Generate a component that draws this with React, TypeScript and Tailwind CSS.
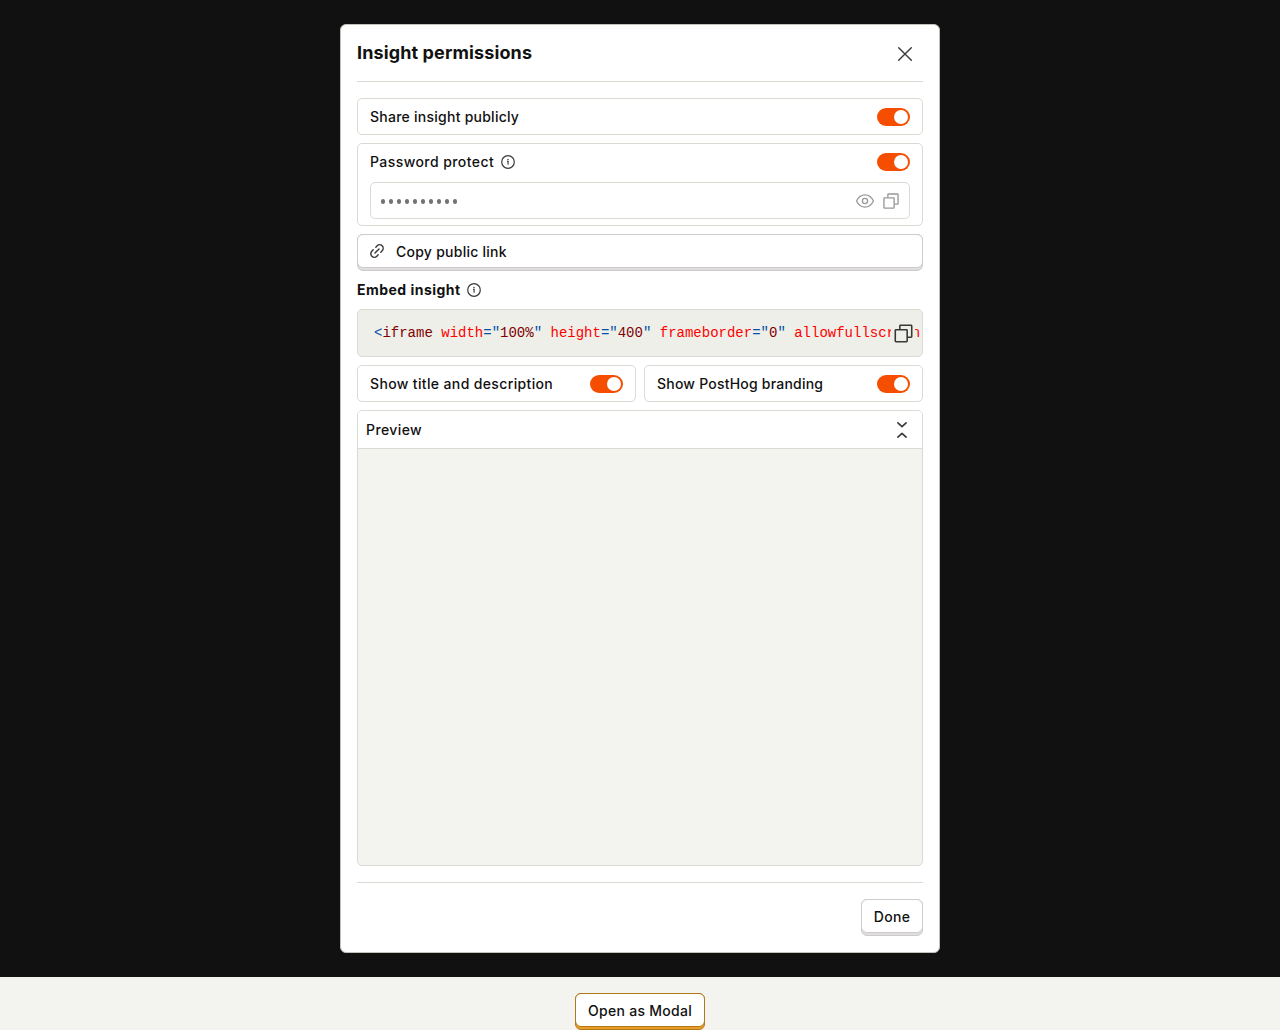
import React from 'react';

function InfoIcon() {
  return (
    <svg width="16" height="16" viewBox="0 0 16 16" fill="none" stroke="#383838" className="shrink-0">
      <circle cx="8" cy="8" r="6.3" strokeWidth="1.2" />
      <path d="M7 7.4h1.1v3.4" strokeWidth="1.1" />
      <circle cx="8" cy="5.4" r="0.75" fill="#383838" stroke="none" />
    </svg>
  );
}

function CopyIcon({ className }: { className: string }) {
  return (
    <svg viewBox="0 0 24 24" fill="none" stroke="currentColor" strokeWidth="1.8" strokeLinejoin="round" className={className}>
      <rect x="2.6" y="7.8" width="13.6" height="13.6" rx="0.8" />
      <path d="M7.8 7.4V3.4a.8.8 0 0 1 .8-.8h12a.8.8 0 0 1 .8.8v12a.8.8 0 0 1-.8.8h-4" />
    </svg>
  );
}

function Toggle() {
  return (
    <span className="flex h-[18px] w-[33px] shrink-0 items-center justify-end rounded-full bg-[#f54e00] pr-[2px]">
      <span className="size-[14px] rounded-full bg-white" />
    </span>
  );
}

function SwitchRow({ label, className }: { label: string; className: string }) {
  return (
    <label className={`flex h-[37px] items-center justify-between rounded-[5px] border border-[#dadad2] px-3 ${className}`}>
      {label}
      <Toggle />
    </label>
  );
}

function Button({ children, className }: { children: React.ReactNode; className: string }) {
  return (
    <button type="button" className={`flex h-[37px] flex-col rounded-[6px] border ${className}`}>
      {children}
    </button>
  );
}

export default function App() {
  return (
    <div className="h-[1030px] overflow-hidden bg-[#f3f4ef] font-['Inter',sans-serif] text-sm leading-5 font-medium text-[#111]">
      <div className="flex h-[977px] justify-center bg-[#111] pt-6">
        <div className="flex h-[929px] w-[600px] flex-col rounded-[6px] border border-[#c1c2b9] bg-white px-4">
          <header className="flex h-[57px] shrink-0 items-center justify-between border-b border-[#dadad2]">
            <h3 className="text-[18px] leading-6 font-bold tracking-[0.12px]">Insight permissions</h3>
            <svg width="16" height="16" viewBox="0 0 16 16" fill="none" stroke="#383838" strokeWidth="1.4" strokeLinecap="round" className="mt-[2px] mr-[10px]">
              <path d="M1.7 1.7l12.6 12.6M14.3 1.7L1.7 14.3" />
            </svg>
          </header>

          <div className="flex flex-col gap-2 pt-4">
            <SwitchRow label="Share insight publicly" className="tracking-[0.25px]" />

            <div className="h-[83px] rounded-[5px] border border-[#dadad2] px-3">
              <div className="flex h-[36px] items-center">
                <span className="tracking-[0.43px]">Password protect</span>
                <span className="ml-1.5 flex"><InfoIcon /></span>
                <span className="ml-auto"><Toggle /></span>
              </div>
              <div className="mt-[2px] flex h-[37px] items-center rounded-[5px] border border-[#dadad2] px-2">
                <span className="flex gap-[4px] pt-[2px] pl-[2px]">
                  {Array.from({ length: 10 }, (_, i) => (
                    <span key={i} className="h-[5px] w-[4px] rounded-full bg-[#737373]" />
                  ))}
                </span>
                <svg width="20" height="20" viewBox="0 0 20 20" fill="none" stroke="#999" strokeWidth="1.3" strokeLinejoin="round" className="ml-auto">
                  <path d="M1.5 10C3.5 6 6.4 3.9 10 3.9S16.500 6 18.500 10c-2 4-4.900 6.100-8.500 6.100S3.500 14 1.500 10z" />
                  <circle cx="10" cy="10" r="2.6" />
                </svg>
                <CopyIcon className="mr-[1px] ml-[7px] size-[18px] text-[#999]" />
              </div>
            </div>

            <Button className="w-full border-[#ccc] bg-[#e1dddd]">
              <span className="-mx-px -mt-px flex h-[34px] items-center self-stretch rounded-[6px] border border-[#ccc] bg-white px-[10px] pt-[1px]">
                <svg width="18" height="18" viewBox="0 0 24 24" fill="none" stroke="#383838" strokeWidth="1.9" strokeLinecap="round" strokeLinejoin="round" className="-mt-px">
                  <g transform="rotate(-45 12 12)">
                    <path d="M9.500 7.300H7a4.700 4.700 0 0 0 0 9.400h2.500" />
                    <path d="M14.500 7.300H17a4.700 4.700 0 0 1 0 9.400h-2.500" />
                    <path d="M8.200 12h7.600" />
                  </g>
                </svg>
                <span className="ml-[10px] tracking-[0.25px]">Copy public link</span>
              </span>
            </Button>

            <div className="flex h-[22px] items-center gap-[5px] font-bold tracking-[0.48px]">
              Embed insight
              <InfoIcon />
            </div>

            <div className="relative h-[48px] overflow-hidden rounded-[5px] border border-[#dadad2] bg-[#eeefe9] pl-4">
              <pre className="font-['Liberation_Mono',monospace] text-sm leading-[46px] font-normal">
                <span className="text-[#0451a5]">&lt;</span>
                <span className="text-[#800000]">iframe</span>{' '}
                <span className="text-[#ff0000]">width</span>
                <span className="text-[#0451a5]">="</span>
                <span className="text-[#800000]">100%</span>
                <span className="text-[#0451a5]">"</span>{' '}
                <span className="text-[#ff0000]">height</span>
                <span className="text-[#0451a5]">="</span>
                <span className="text-[#800000]">400</span>
                <span className="text-[#0451a5]">"</span>{' '}
                <span className="text-[#ff0000]">frameborder</span>
                <span className="text-[#0451a5]">="</span>
                <span className="text-[#800000]">0</span>
                <span className="text-[#0451a5]">"</span>{' '}
                <span className="text-[#ff0000]">allowfullscreen</span>
              </pre>
              <button type="button" aria-label="Copy" className="absolute top-[11px] right-[7px] flex size-6 items-center justify-center bg-[#eeefe9] text-[#383838]">
                <CopyIcon className="size-[21px]" />
              </button>
            </div>

            <div className="grid grid-cols-2 gap-2">
              <SwitchRow label="Show title and description" className="tracking-[0.36px]" />
              <SwitchRow label="Show PostHog branding" className="tracking-[0.22px]" />
            </div>

            <section className="flex h-[456px] flex-col overflow-hidden rounded-[5px] border border-[#dadad2] bg-[#f3f4ef]">
              <div className="flex h-[38px] items-center justify-between border-b border-[#dadad2] bg-white pr-[12px] pl-2 tracking-[0.4px]">
                Preview
                <svg width="16" height="20" viewBox="0 0 16 20" fill="none" stroke="#383838" strokeWidth="1.6" strokeLinecap="round" strokeLinejoin="round">
                  <path d="M3.900 2.800L8 6.700l4.100-3.900M3.900 17.200L8 13.300l4.100 3.900" />
                </svg>
              </div>
            </section>
          </div>

          <footer className="mt-4 flex justify-end border-t border-[#dadad2] pt-4">
            <Button className="w-[62px] border-[#ccc] bg-[#e1dddd]">
              <span className="-mx-px -mt-px flex h-[34px] items-center justify-center self-stretch rounded-[6px] border border-[#ccc] bg-white pt-[1px] tracking-[0.3px]">Done</span>
            </Button>
          </footer>
        </div>
      </div>

      <div className="flex justify-center pt-4">
        <Button className="w-[130px] border-[#b17816] bg-[#eb9d2a]">
          <span className="-mx-px -mt-px flex h-[34px] items-center justify-center self-stretch rounded-[6px] border border-[#b17816] bg-white pt-[1px] tracking-[0.28px]">Open as Modal</span>
        </Button>
      </div>
    </div>
  );
}
